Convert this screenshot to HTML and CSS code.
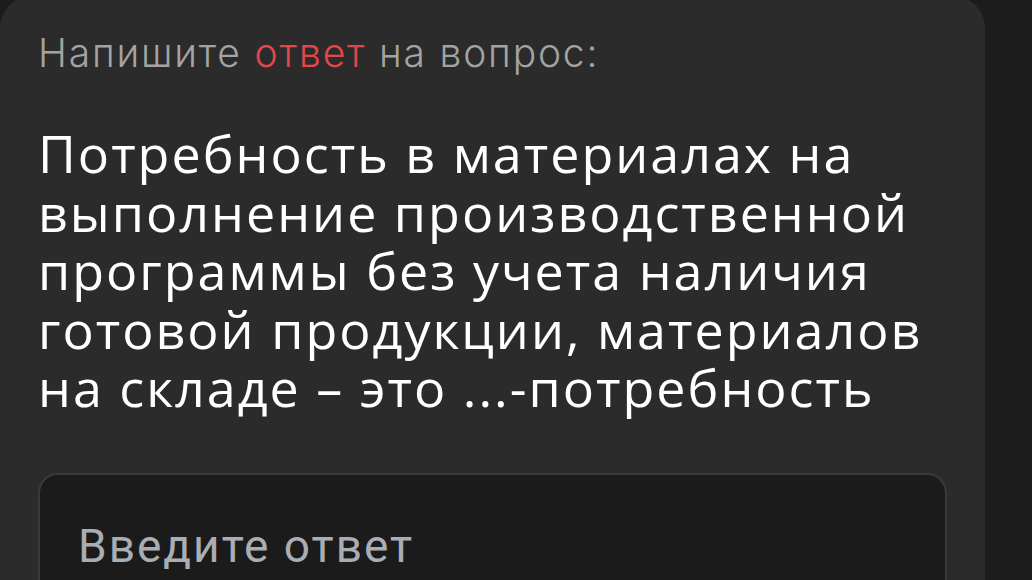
FILE: index.html
```html
<!DOCTYPE html>
<html lang="ru">
<head>
<meta charset="utf-8">
<link rel="stylesheet" href="styles.css">
</head>
<body>
<div class="page">
  <section class="card">
    <p class="prompt">Напишите <span class="accent">ответ</span> на вопрос:</p>
    <h1 class="question">Потребность в материалах на<br>выполнение производственной<br>программы без учета наличия<br>готовой продукции, материалов<br>на складе – это ...-потребность</h1>
    <div class="answer">
      <span class="placeholder">Введите ответ</span>
    </div>
  </section>
  <div class="side"></div>
</div>
</body>
</html>
```
FILE: styles.css
```css
html, body {
  margin: 0;
  padding: 0;
  background: #1c1c1c;
  overflow: hidden;
  height: 580px;
}
.page {
  display: flex;
  width: 1032px;
  height: 580px;
  overflow: hidden;
}
.card {
  width: 985px;
  flex: none;
  margin-top: -4px;
  height: 640px;
  background: #2b2b2b;
  border-radius: 32px;
  box-sizing: border-box;
  padding: 0 38px 0 38px;
}
.prompt {
  margin: 0;
  padding-top: 34px;
  font-family: "Inter", "Noto Sans", sans-serif;
  font-weight: 300;
  font-size: 39px;
  line-height: 46px;
  color: #a3a3a3;
  letter-spacing: 1.8px;
}
.accent {
  color: #e3474c;
}
.question {
  margin: 48px 0 0 0;
  font-family: "Open Sans", "Noto Sans", sans-serif;
  font-weight: 400;
  font-size: 52px;
  line-height: 58.5px;
  color: #ffffff;
  letter-spacing: 2px;
}
.answer {
  margin-top: 56px;
  height: 160px;
  background: #1b1b1b;
  border: 2px solid #3a3a3a;
  border-radius: 20px;
  padding: 44px 38px;
  box-sizing: border-box;
}
.placeholder {
  font-family: "Roboto", "Noto Sans", sans-serif;
  font-size: 46px;
  line-height: 54px;
  color: #a9adb4;
  letter-spacing: 2px;
}
.side {
  flex: 1;
}
```
